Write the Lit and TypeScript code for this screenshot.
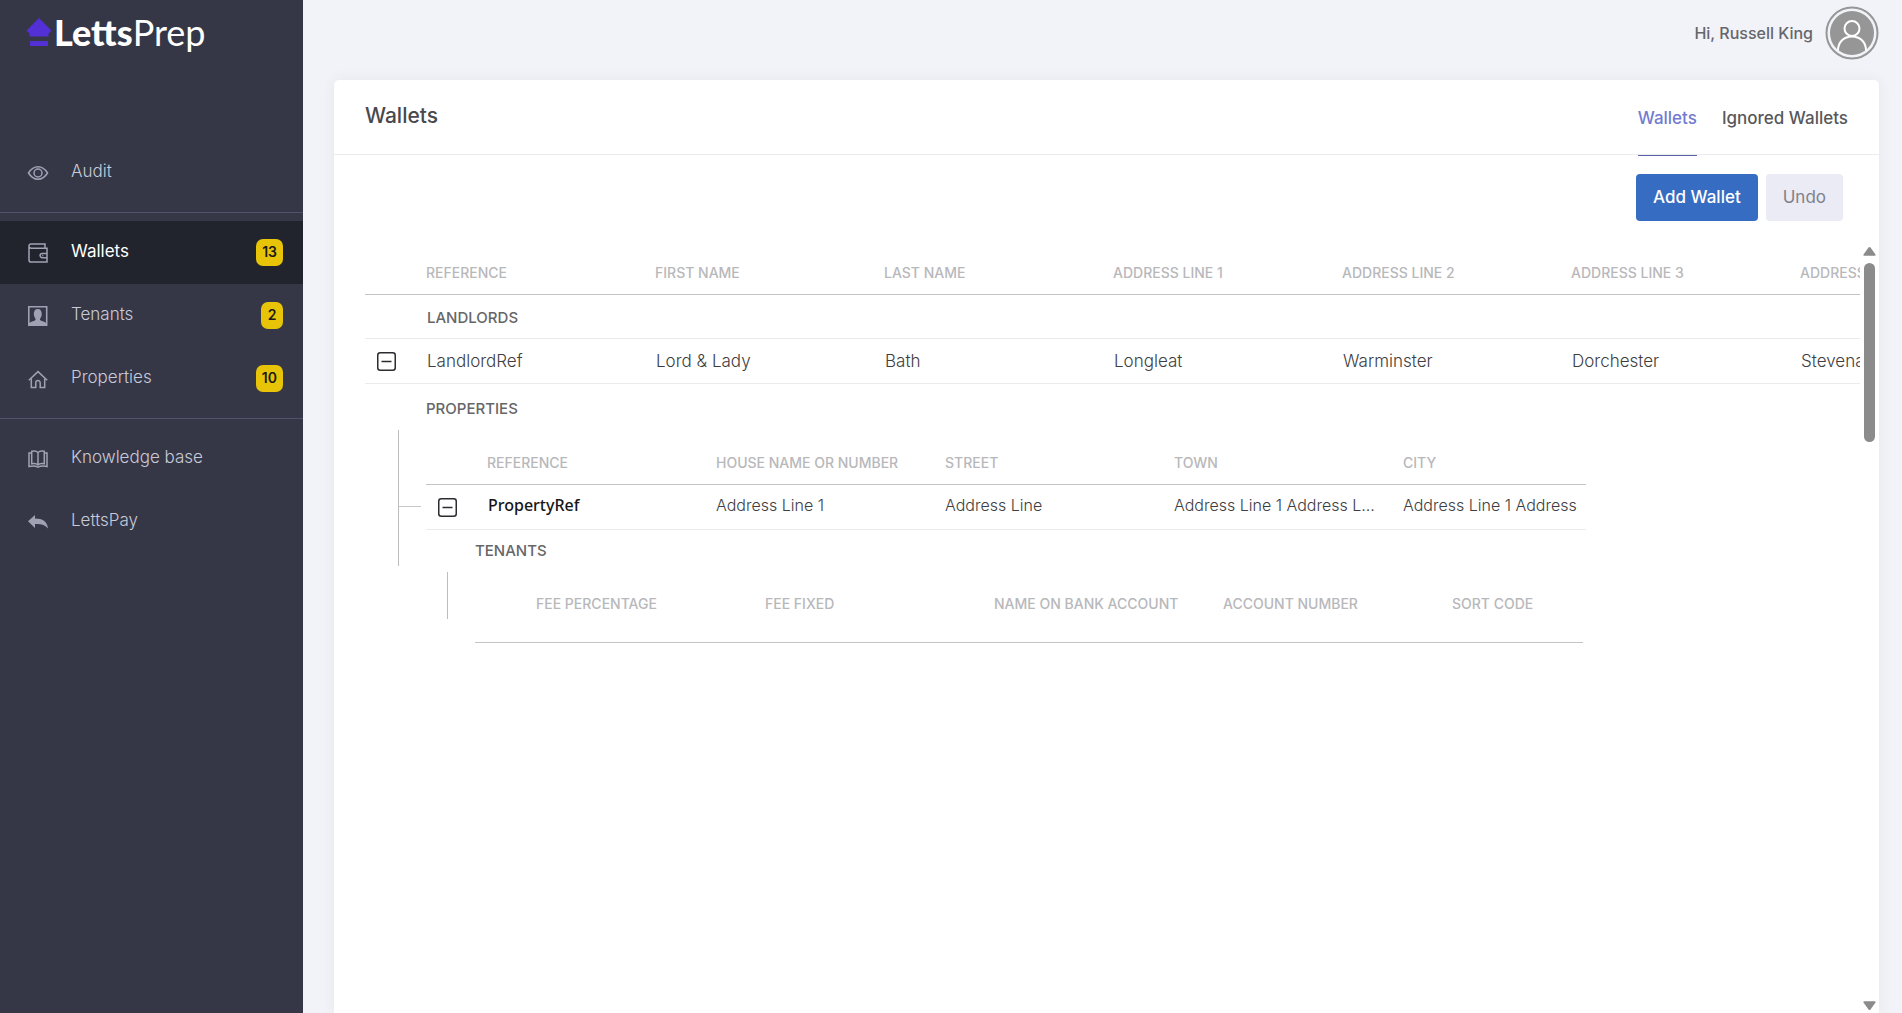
import { LitElement, html, svg, css, nothing, type TemplateResult } from "lit";
import { customElement, property, state } from "lit/decorators.js";
import { classMap } from "lit/directives/class-map.js";

type IconName = "eye" | "wallet" | "tenant" | "home" | "book" | "reply";

const icons: Record<IconName, TemplateResult> = {
  eye: svg`<path d="M.5 10c2.600-4.200 5.800-6.200 9.500-6.200s6.900 2 9.500 6.200c-2.600 4.200-5.800 6.200-9.500 6.200S3.100 14.200.5 10z"/><circle cx="10" cy="10" r="4"/>`,
  wallet: svg`<path d="M17 4.500V1H3.200C1.800 1 1 1.800 1 2.900v14c0 1.300.9 2.100 2.200 2.100H19V5.200H3.200C1.900 5.200 1 4.300 1 3"/><path d="M19 10.500h-4.800a2 2 0 0 0 0 4.200H19"/><path d="M14.300 12.600h1"/>`,
  tenant: svg`<path fill="currentColor" fill-rule="evenodd" stroke="none" d="M0 0h19.500v20H0zM1.600 1.600v15.300c1.400-1.200 3.500-1.600 5.700-2.600.4-.4.300-1.500-.1-2-.8-1-1.300-2.300-1.400-3.700C5.700 5 7 3 9.750 3s4.100 2 4 5.600c-.1 1.400-.6 2.700-1.400 3.700-.4.500-.5 1.600-.1 2 2.200 1 4.300 1.400 5.650 2.600V1.600z"/>`,
  home: svg`<path d="M.8 11.300 10 2.600l9.200 8.700"/><path d="M3.300 9.500v9h4.500v-4.700a2.200 2.200 0 0 1 4.400 0v4.700h4.500v-9"/>`,
  book: svg`<path d="M10 3.500C8.600 2 6 1.600 3.700 2.300v12.400c2.400-.6 4.800-.3 6.300 1.200 1.500-1.500 3.900-1.800 6.300-1.200V2.300C14 1.600 11.400 2 10 3.500zV15.500"/><path d="M3.500 4H1v13.500c3.500-.9 6.500-.7 9 .6 2.500-1.300 5.500-1.500 9-.6V4h-2.500"/>`,
  reply: svg`<path fill="currentColor" stroke="none" d="M0 9.300 7 3v3.600c7.500 0 12.300 3 13 9.900-3-3.600-7-4.800-13-4.400V16z"/>`,
};

interface NavItem {
  label: string;
  icon: IconName;
  count?: number;
}

const navGroups: NavItem[][] = [
  [{ label: "Audit", icon: "eye" }],
  [
    { label: "Wallets", icon: "wallet", count: 13 },
    { label: "Tenants", icon: "tenant", count: 2 },
    { label: "Properties", icon: "home", count: 10 },
  ],
  [
    { label: "Knowledge base", icon: "book" },
    { label: "LettsPay", icon: "reply" },
  ],
];

@customElement("side-nav")
export class SideNav extends LitElement {
  @property() active = "Wallets";

  static styles = css`
    :host { display: block; background: #353747; color: #c9cad8; }
    .logo { display: flex; align-items: flex-start; height: 141px; box-sizing: border-box; padding: 10px 0 0 26px; color: #fff; text-decoration: none; font-family: Lato, sans-serif; font-size: 36px; line-height: 44px; }
    .logo svg { width: 26px; height: 30px; margin: 7px 2px 0 0; flex: none; }
    .bold { font-weight: 900; }
    .thin { font-weight: 400; }
    ul { list-style: none; margin: 0; padding: 0; }
    .group + .group { margin-top: 8px; padding-top: 8px; border-top: 1px solid #50536a; }
    .item { display: flex; align-items: center; height: 63px; box-sizing: border-box; padding: 0 20px 0 28px; color: inherit; text-decoration: none; font-size: 17px; font-weight: 300; }
    .item svg { width: 20px; height: 20px; margin-right: 23px; fill: none; stroke: currentColor; stroke-width: 1.5; color: #a0a2b3; overflow: visible; }
    .label { flex: 1; padding-bottom: 3px; }
    .current { background: #22242d; color: #fff; font-weight: 400; }
    .badge { min-width: 22px; height: 27px; box-sizing: border-box; padding: 0 6px; border-radius: 7px; background: #e8c409; color: #1d1b12; font-size: 14px; font-weight: 600; line-height: 25px; text-align: center; }
  `;

  render() {
    return html`
      <a class="logo" href="#" aria-label="LettsPrep">
        <svg viewBox="0 0 26 30" fill="#5230d6"><path d="M13 1 25.500 13.500 22.500 16.500v3H3.500v-3L.5 13.500z"/><path d="M4 24h18v5H4z"/></svg>
        <span class="bold">Letts</span><span class="thin">Prep</span>
      </a>
      <nav>
        ${navGroups.map(
          (group) => html`<ul class="group">
            ${group.map(
              (item) => html`<li>
                <a href="#" class=${classMap({ item: true, current: item.label === this.active })}>
                  <svg viewBox="0 0 20 20" aria-hidden="true">${icons[item.icon]}</svg>
                  <span class="label">${item.label}</span>
                  ${item.count === undefined ? nothing : html`<span class="badge">${item.count}</span>`}
                </a>
              </li>`
            )}
          </ul>`
        )}
      </nav>
    `;
  }
}

const landlordColumns = ["Reference", "First name", "Last name", "Address line 1", "Address line 2", "Address line 3", "Address line 4"];
const landlord = ["LandlordRef", "Lord & Lady", "Bath", "Longleat", "Warminster", "Dorchester", "Stevenage"];
const propertyColumns = ["Reference", "House name or number", "Street", "Town", "City"];
const propertyRow = ["PropertyRef", "Address Line 1", "Address Line", "Address Line 1 Address Line 2", "Address Line 1 Address"];
const tenantColumns = ["Fee percentage", "Fee fixed", "Name on bank account", "Account number", "Sort code"];

@customElement("wallet-tree")
export class WalletTree extends LitElement {
  @state() private landlordOpen = true;
  @state() private propertyOpen = true;

  static styles = css`
    :host { display: block; overflow: hidden; }
    table { table-layout: fixed; border-collapse: separate; border-spacing: 0; }
    .landlords { width: 1664px; }
    .properties { width: 1160px; }
    .tenants { width: 1108px; }
    .gutter { width: 61px; }
    .field { width: 229px; }
    th, td { padding: 0; text-align: left; box-sizing: border-box; }
    .head th { height: 55px; padding: 0 0 11px; vertical-align: bottom; border-bottom: 1px solid #c4c4c6; color: #b8b8bb; font-size: 14px; font-weight: 500; line-height: 20px; text-transform: uppercase; white-space: nowrap; }
    .tenants .head th { height: 71px; padding-bottom: 28px; }
    .section { height: 44px; padding: 2px 0 0 1px; border-bottom: 1px solid #ebebed; }
    .title { color: #666668; font-size: 15px; font-weight: 500; line-height: 20px; text-transform: uppercase; }
    .row td { height: 45px; padding: 0 22px 0 1px; border-bottom: 1px solid #ebebed; color: #3e3e42; font-size: 17px; font-weight: 300; overflow: hidden; text-overflow: ellipsis; white-space: nowrap; }
    .properties .row td { padding: 0 28px 4px 0; font-size: 16px; }
    .properties .row td:last-child { padding-right: 0; }
    .row .control, .properties .row .control { padding: 0 0 0 12px; text-overflow: clip; }
    .properties .row .strong { padding-left: 1px; color: #161618; font-family: "Noto Sans", sans-serif; font-size: 16px; font-weight: 500; }
    .toggle { display: block; width: 19px; height: 19px; padding: 0; border: 0; background: none; color: #2c2c30; cursor: pointer; }
    .toggle svg { display: block; width: 19px; height: 19px; fill: none; stroke: currentColor; stroke-width: 1.5; }
    .branch { display: grid; grid-template-columns: 61px 1fr; }
    .branch .title { grid-column: 2; display: flex; align-items: center; height: 46px; box-sizing: border-box; margin: 0; padding-top: 3px; }
    .rail { width: 23px; height: 136px; box-sizing: border-box; margin-left: 33px; border-left: 1px solid #bdbdc0; }
    .rail::before { content: ""; display: block; height: 76px; border-bottom: 1px solid #c8c8ca; }
    .inner { grid-template-columns: 49px 1fr; }
    .branch.inner .title { height: 42px; padding: 0; }
    .inner .rail { height: 47px; margin-left: 21px; }
    .inner .rail::before { display: none; }
  `;

  private columns(count: number) {
    return html`<colgroup><col class="gutter" />${Array.from({ length: count }, () => html`<col class="field" />`)}</colgroup>`;
  }

  private head(names: string[]) {
    return html`<thead><tr class="head"><th></th>${names.map((n) => html`<th scope="col">${n}</th>`)}</tr></thead>`;
  }

  private toggle(open: boolean, name: string, flip: () => void) {
    return html`<td class="control">
      <button class="toggle" aria-label=${`${open ? "Collapse" : "Expand"} ${name}`} aria-expanded=${open ? "true" : "false"} @click=${flip}>
        <svg viewBox="0 0 19 19"><rect x=".75" y=".75" width="17.500" height="17.500" rx="2.500"/><path d="M4.500 9.500h10"/>${open ? nothing : svg`<path d="M9.500 4.500v10"/>`}</svg>
      </button>
    </td>`;
  }

  render() {
    return html`<table class="landlords">
      ${this.columns(7)} ${this.head(landlordColumns)}
      <tbody>
        <tr><th class="section"></th><th class="section title" colspan="7" scope="rowgroup">Landlords</th></tr>
        <tr class="row">
          ${this.toggle(this.landlordOpen, "LandlordRef", () => (this.landlordOpen = !this.landlordOpen))}
          ${landlord.map((v) => html`<td>${v}</td>`)}
        </tr>
        ${this.landlordOpen ? html`<tr><td colspan="8">${this.properties()}</td></tr>` : nothing}
      </tbody>
    </table>`;
  }

  private properties() {
    return html`<div class="branch">
      <h2 class="title">Properties</h2>
      <div class="rail"></div>
      <table class="properties">
        <colgroup><col class="gutter" /><col class="field" /><col class="field" /><col class="field" /><col class="field" /><col /></colgroup>
        ${this.head(propertyColumns)}
        <tbody>
          <tr class="row">
            ${this.toggle(this.propertyOpen, "PropertyRef", () => (this.propertyOpen = !this.propertyOpen))}
            ${propertyRow.map((v, i) => html`<td class=${i === 0 ? "strong" : ""}>${v}</td>`)}
          </tr>
          ${this.propertyOpen ? html`<tr><td colspan="6">${this.tenants()}</td></tr>` : nothing}
        </tbody>
      </table>
    </div>`;
  }

  private tenants() {
    return html`<div class="branch inner">
      <h3 class="title">Tenants</h3>
      <div class="rail"></div>
      <table class="tenants">
        <colgroup><col class="gutter" /><col class="field" /><col class="field" /><col class="field" /><col class="field" /><col /></colgroup>
        ${this.head(tenantColumns)}
      </table>
    </div>`;
  }
}

@customElement("app-root")
export class AppRoot extends LitElement {
  @state() private tab = "Wallets";

  static styles = css`
    :host { display: grid; grid-template-columns: 303px minmax(0, 1fr); height: 100vh; overflow: hidden; background: #f1f3f8; color: #58585c; font: 400 16px/24px Inter, "Open Sans", sans-serif; }
    .main { display: flex; flex-direction: column; min-height: 0; padding: 0 23px 0 31px; }
    .user { display: flex; align-items: center; justify-content: flex-end; gap: 12px; height: 80px; box-sizing: border-box; padding: 6px 0 20px; flex: none; color: #66666b; font-weight: 500; }
    .avatar { width: 54px; height: 54px; padding: 0; border: 0; background: none; }
    .avatar svg { display: block; }
    .card { flex: 1; display: flex; flex-direction: column; min-height: 0; border-radius: 5px 5px 0 0; background: #fff; box-shadow: 0 0 14px rgba(70, 70, 110, 0.07); }
    .bar { display: flex; justify-content: space-between; height: 75px; box-sizing: border-box; padding: 0 31px; border-bottom: 1px solid #ebecef; flex: none; }
    h1 { margin: 0; color: #48484d; font-size: 21px; font-weight: 500; line-height: 72px; }
    .tabs { display: flex; gap: 25px; }
    .tab { height: 76px; padding: 0; border: 0; border-bottom: 1px solid transparent; background: none; color: #58585c; font: inherit; font-size: 17px; font-weight: 500; }
    .chosen { border-color: #5a63a8; color: #737bd0; }
    .actions { display: flex; justify-content: flex-end; gap: 8px; padding: 19px 36px 19px 31px; }
    .button { height: 47px; padding: 0 17px 2px; border: 0; border-radius: 4px; font: inherit; font-size: 17px; }
    .primary { background: #366cc2; color: #fff; font-weight: 500; }
    .quiet { background: #ebebf5; color: #818189; }
    .content { flex: 1; display: flex; min-height: 0; padding: 0 3px 0 31px; }
    wallet-tree { flex: 1; min-width: 0; }
    .scroll { display: flex; flex-direction: column; align-items: center; gap: 7px; width: 13px; margin-left: 3px; padding: 7px 0 3px; fill: #8b8b8b; }
    .scroll svg { display: block; flex: none; }
    .track { flex: 1; }
    .thumb { width: 11px; height: 179px; border-radius: 6px; background: #8b8b8b; }
  `;

  render() {
    return html`
      <side-nav></side-nav>
      <main class="main">
        <header class="user">
          <span>Hi, Russell King</span>
          <button class="avatar" aria-label="Account">
            <svg width="54" height="54" viewBox="0 0 54 54" fill="none"><circle cx="27" cy="27" r="25.500" stroke="#969696" stroke-width="2"/><circle cx="27" cy="27" r="22" fill="#969696"/><g stroke="#fff" stroke-width="2"><circle cx="27" cy="22.500" r="7.500"/><path d="M13 44.500c0-8.500 6-14 14-14s14 5.500 14 14"/></g></svg>
          </button>
        </header>
        <section class="card">
          <div class="bar">
            <h1>Wallets</h1>
            <div class="tabs" role="tablist">
              ${["Wallets", "Ignored Wallets"].map(
                (t) => html`<button role="tab" aria-selected=${t === this.tab ? "true" : "false"} class=${classMap({ tab: true, chosen: t === this.tab })} @click=${() => (this.tab = t)}>${t}</button>`
              )}
            </div>
          </div>
          <div class="actions">
            <button class="button primary">Add Wallet</button>
            <button class="button quiet">Undo</button>
          </div>
          <div class="content">
            <wallet-tree></wallet-tree>
            <div class="scroll" aria-hidden="true">
              <svg width="13" height="9" viewBox="0 0 13 9"><path d="M5.500.6a1.300 1.300 0 0 1 2 0l5 6.800c.4.700 0 1.400-.8 1.400H1.300c-.8 0-1.200-.7-.8-1.400z"/></svg>
              <div class="track"><div class="thumb"></div></div>
              <svg width="13" height="9" viewBox="0 0 13 9"><path d="M5.500 8.400a1.300 1.300 0 0 0 2 0l5-6.800c.4-.7 0-1.400-.8-1.400H1.300C.5.200.1.900.5 1.600z"/></svg>
            </div>
          </div>
        </section>
      </main>
    `;
  }
}
